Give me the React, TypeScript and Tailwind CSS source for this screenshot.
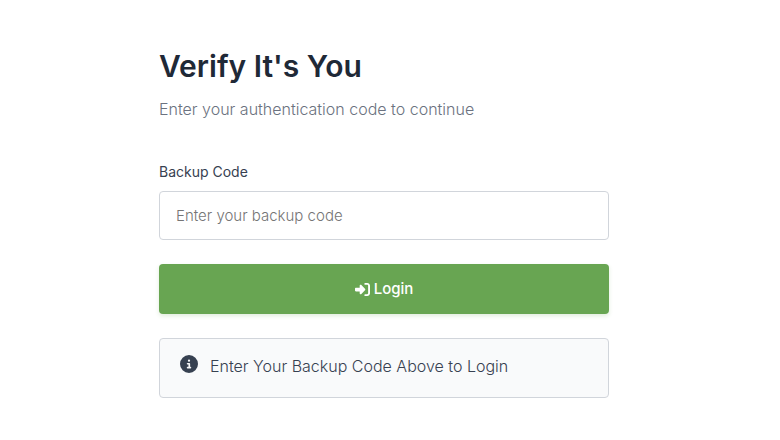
import { FaCircleInfo, FaRightToBracket } from "react-icons/fa6";

export default function App() {
  return (
    <main className="min-h-screen bg-white pr-3 pt-11 pb-10 font-['Inter',sans-serif] text-[#374151]">
      <div className="mx-auto w-full max-w-[450px]">
        <h1 className="text-[30px] leading-11 font-semibold text-[#1f2937]">Verify It's You</h1>
        <p className="mt-[9px] text-base leading-6 font-light text-[#6b7280]">
          Enter your authentication code to continue
        </p>
        <form className="mt-[39px]" onSubmit={(event) => event.preventDefault()}>
          <label htmlFor="backup-code" className="block text-sm leading-6">
            Backup Code
          </label>
          <input
            id="backup-code"
            type="text"
            placeholder="Enter your backup code"
            className="mt-[7px] block h-[49px] w-full rounded border border-[#d1d5db] bg-white px-4 text-[15px] font-light placeholder:text-[#757575]"
          />
          <button
            type="submit"
            className="mt-6 flex h-[50px] w-full items-center justify-center gap-1 rounded bg-[#68a552] text-[15px] font-medium text-white shadow-[0_2px_4px_rgba(104,165,82,0.2)]"
          >
            <FaRightToBracket className="size-[15px]" aria-hidden="true" />
            Login
          </button>
        </form>
        <div className="mt-6 flex gap-3 rounded border border-[#d1d5db] bg-[#f9fafb] px-5 pt-4 pb-5">
          <FaCircleInfo className="size-[18px] shrink-0" aria-hidden="true" />
          <p className="text-base leading-[22px] font-light">Enter Your Backup Code Above to Login</p>
        </div>
      </div>
    </main>
  );
}
